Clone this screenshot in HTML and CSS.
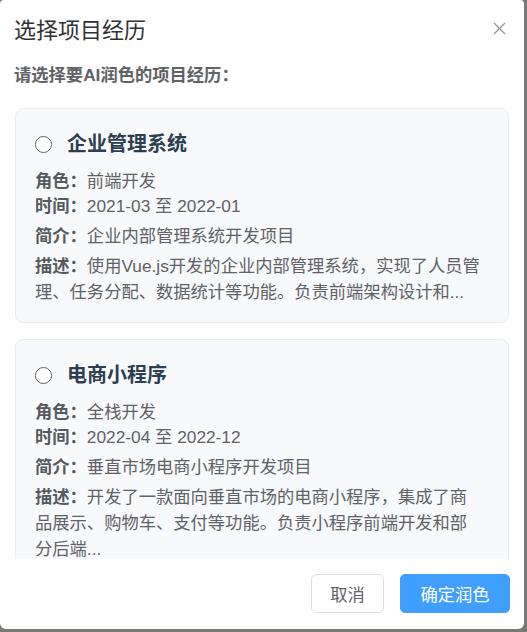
FILE: index.html
```html
<!DOCTYPE html>
<html lang="zh">
<head>
<meta charset="utf-8">
<title>选择项目经历</title>
<link rel="stylesheet" href="styles.css">
</head>
<body>
<div class="overlay">
  <div class="dialog">
    <div class="dialog-header">
      <span class="dialog-title">选择项目经历</span>
      <button class="close-btn" aria-label="关闭">
        <svg width="13" height="13" viewBox="0 0 13 13"><path d="M1 1 L12 12 M12 1 L1 12" stroke="#909399" stroke-width="1.3" fill="none"/></svg>
      </button>
    </div>
    <div class="dialog-body">
      <p class="prompt">请选择要AI润色的项目经历：</p>
      <div class="list">
        <div class="card">
          <div class="card-head">
            <span class="radio"></span>
            <span class="card-title">企业管理系统</span>
          </div>
          <div class="info">
            <p class="line"><b>角色：</b>前端开发</p>
            <p class="line"><b>时间：</b>2021-03 至 2022-01</p>
          </div>
          <p class="block"><b>简介：</b>企业内部管理系统开发项目</p>
          <p class="block"><b>描述：</b>使用Vue.js开发的企业内部管理系统，实现了人员管理、任务分配、数据统计等功能。负责前端架构设计和...</p>
        </div>
        <div class="card">
          <div class="card-head">
            <span class="radio"></span>
            <span class="card-title">电商小程序</span>
          </div>
          <div class="info">
            <p class="line"><b>角色：</b>全栈开发</p>
            <p class="line"><b>时间：</b>2022-04 至 2022-12</p>
          </div>
          <p class="block"><b>简介：</b>垂直市场电商小程序开发项目</p>
          <p class="block"><b>描述：</b>开发了一款面向垂直市场的电商小程序，集成了商品展示、购物车、支付等功能。负责小程序前端开发和部分后端...</p>
        </div>
      </div>
    </div>
    <div class="dialog-footer">
      <button class="btn btn-default">取消</button>
      <button class="btn btn-primary">确定润色</button>
    </div>
  </div>
</div>
</body>
</html>
```

FILE: styles.css
```css
* { box-sizing: border-box; }
html, body { margin: 0; padding: 0; }
body {
  width: 527px;
  height: 632px;
  overflow: hidden;
  background: #7a7977;
  font-family: "Liberation Sans", "Noto Sans CJK SC", sans-serif;
}
.overlay {
  width: 527px;
  height: 632px;
}
.dialog {
  width: 524px;
  height: 629px;
  background: #ffffff;
  border-radius: 4px 4px 6px 6px;
  display: flex;
  flex-direction: column;
}
.dialog-header {
  display: flex;
  align-items: center;
  justify-content: space-between;
  padding: 15px 18px 0 14px;
  height: 47px;
  flex: none;
}
.dialog-title {
  font-size: 22px;
  line-height: 30px;
  color: #303133;
}
.close-btn {
  border: none;
  background: none;
  padding: 0;
  margin-top: -6px;
  width: 13px;
  height: 13px;
  display: flex;
}
.dialog-body {
  height: 512px;
  flex: none;
  overflow: hidden;
  padding: 0 15px;
}
.prompt {
  margin: 16px 0 0 -1px;
  font-size: 17.3px;
  line-height: 24px;
  font-weight: bold;
  color: #606266;
}
.list {
  margin-top: 21px;
  display: flex;
  flex-direction: column;
  gap: 16px;
}
.card {
  background: #f8f9fb;
  border: 1px solid #e9ecf1;
  border-radius: 8px;
  padding: 20px 24px 17px 19px;
}
.card-head {
  display: flex;
  align-items: center;
  height: 30px;
}
.radio {
  width: 17px;
  height: 17px;
  border: 1.5px solid #5f6368;
  border-radius: 50%;
  background: #fff;
  margin-right: 15px;
  flex: none;
}
.card-title {
  font-size: 20px;
  font-weight: bold;
  color: #2c3e50;
  line-height: 30px;
}
.info {
  margin-top: 10px;
}
.line, .block {
  margin: 0;
  font-size: 17.3px;
  line-height: 25px;
  color: #606266;
}
.block {
  margin-top: 4px;
  line-height: 26px;
}
.line b, .block b {
  font-weight: bold;
  color: #555a60;
}
.dialog-footer {
  display: flex;
  justify-content: flex-end;
  gap: 16px;
  padding: 15px 14px 16px 0;
}
.btn {
  height: 39px;
  border-radius: 5px;
  font-family: "Liberation Sans", "Noto Sans CJK SC", sans-serif;
  font-size: 17.3px;
  cursor: pointer;
}
.btn-default {
  background: #fff;
  border: 1px solid #dcdfe6;
  color: #606266;
  width: 73px;
  padding: 0;
}
.btn-primary {
  background: #409eff;
  border: 1px solid #409eff;
  color: #fff;
  width: 110px;
  padding: 0;
}
```
